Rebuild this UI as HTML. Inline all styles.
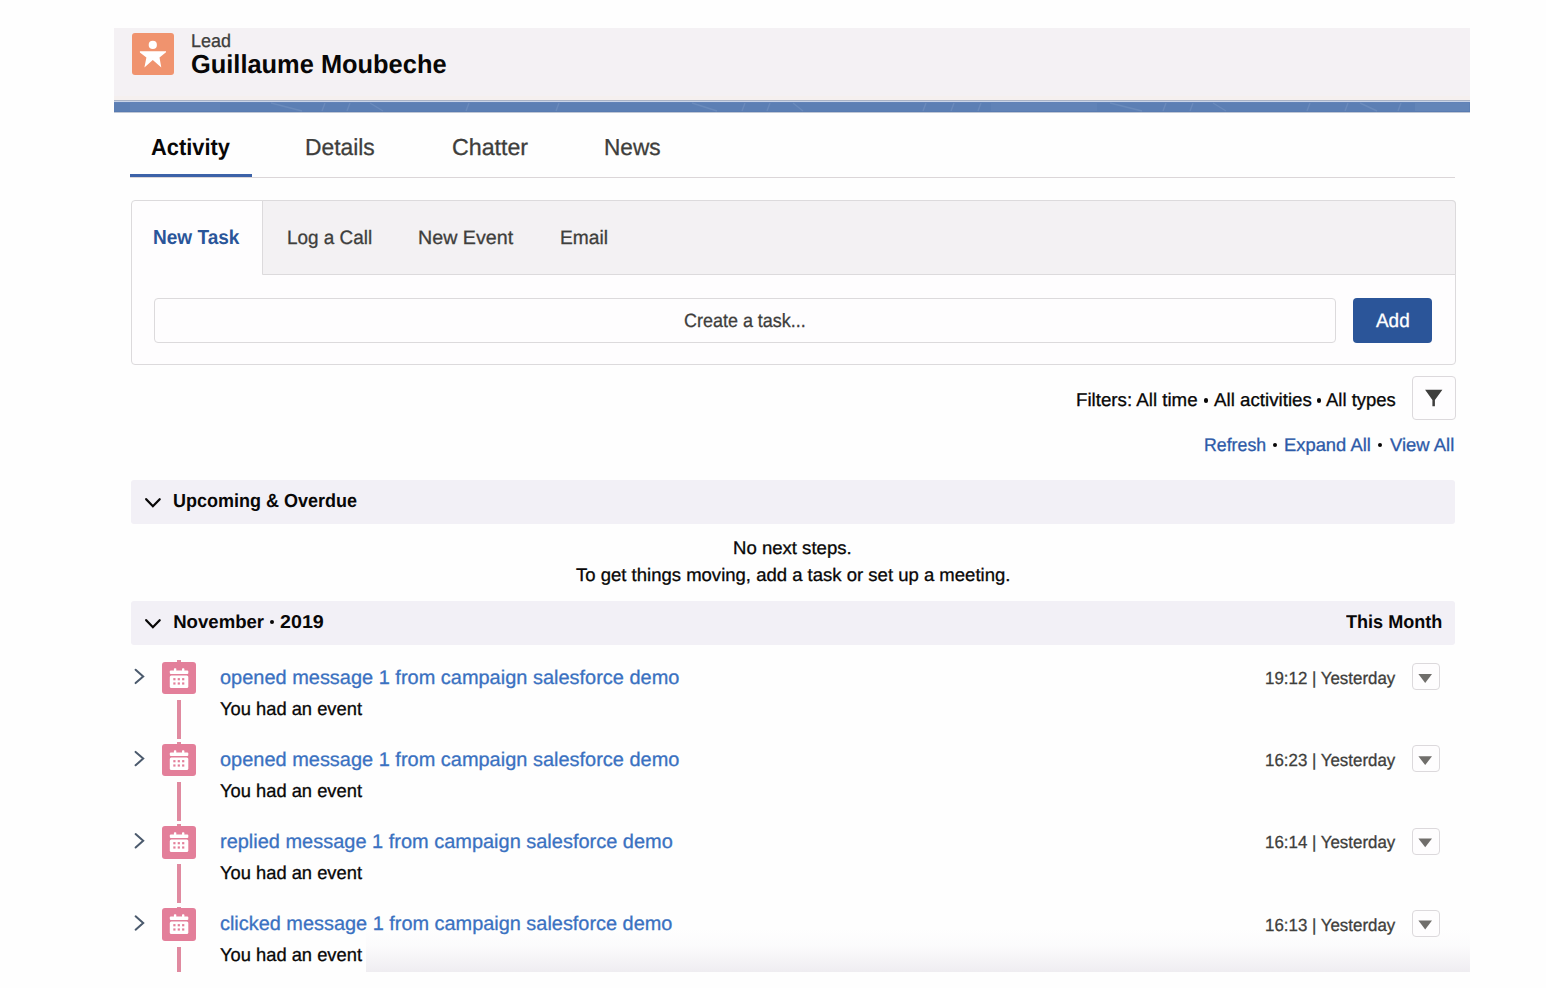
<!DOCTYPE html>
<html><head><meta charset="utf-8">
<style>
html,body{margin:0;padding:0;}
body{width:1546px;height:988px;overflow:hidden;text-rendering:geometricPrecision;background:#fefefe;position:relative;font-family:"Liberation Sans", sans-serif;}
.a{position:absolute;box-sizing:border-box;}
.t{position:absolute;white-space:nowrap;-webkit-text-stroke:0.3px currentColor;line-height:1.2;transform-origin:0 50%;font-family:"Liberation Sans", sans-serif;}
.hdr{left:114px;top:28px;width:1356px;height:72px;background:linear-gradient(#f4f1f4 0,#f4f1f4 68px,#f5f0ef 68px,#f5f0ef 72px);}
.stripe{left:114px;top:100px;width:1356px;height:13px;background:linear-gradient(#a9b3c6 0,#a9b3c6 1px,#c9d4e8 1px,#c9d4e8 2px,#6585bb 2px,#5c7fb4 3px,#5c7fb4 11px,#5577ad 12px,#9aa6bb 12px,#e6e8ee 13px);}
.leadicon{left:131.6px;top:32.7px;width:42.8px;height:42.4px;background:#f0936e;border-radius:3px;}
.tabline{left:130px;top:177.2px;width:1325px;height:1px;background:#dbd6d8;}
.tabactive{left:130px;top:174px;width:122px;height:3.2px;background:#3c62a8;}
.card{left:130.5px;top:200px;width:1325px;height:165px;border:1px solid #dcdadc;border-radius:4px;background:#fefdfe;}
.cardtabs{left:262px;top:200px;width:1193.5px;height:75px;background:#f3f1f3;border-left:1px solid #dcdadc;border-bottom:1px solid #dcdadc;border-top:1px solid #dcdadc;border-right:1px solid #dcdadc;border-radius:0 4px 0 0;}
.input{left:153.5px;top:298px;width:1182.5px;height:44.5px;border:1px solid #dcdadc;border-radius:4px;background:#fefdfe;}
.addbtn{left:1353px;top:298px;width:79px;height:44.5px;background:#2b5599;border-radius:4px;}
.fbtn{left:1412.3px;top:376.3px;width:43.3px;height:43.3px;border:1px solid #dcd9dc;border-radius:4px;background:#fefdfe;}
.sec{left:131px;width:1324px;height:44px;background:#f2f0f6;border-radius:3px;}
.ddbtn{left:1412.3px;width:27.5px;height:27px;border:1px solid #dcd9dc;border-radius:4px;background:#fefdfe;}
.evicon{left:162px;width:34px;height:32.5px;background:#e37f9a;border-radius:3px;}
.tl{left:177.2px;width:3.5px;background:#e08aa0;}
.fade{left:366px;top:928px;width:1104px;height:43.5px;background:linear-gradient(rgba(254,254,254,0) 0%,rgba(250,249,251,0.6) 40%,#efedf1 100%);}
</style></head><body>
<div class="a hdr"></div>
<div class="a stripe"></div>
<svg class="a" style="left:0;top:0" width="1546" height="120">
<g stroke="#9fb6d9" stroke-width="1.4" opacity="0.22" fill="none">
<path d="M271 103 L302 111"/>
<path d="M325 103 L322 111"/>
<path d="M350 103 L347 111"/>
<path d="M370 103 L383 111"/>
<path d="M469 103 L466 111"/>
<path d="M559 103 L556 111"/>
<path d="M692 103 L717 111"/>
<path d="M745 103 L742 111"/>
<path d="M770 103 L767 111"/>
<path d="M793 103 L803 111"/>
<path d="M926 103 L923 111"/>
<path d="M954 103 L951 111"/>
<path d="M981 103 L978 111"/>
<path d="M1110 103 L1142 111"/>
<path d="M1166 103 L1163 111"/>
<path d="M1193 103 L1190 111"/>
<path d="M1213 103 L1226 111"/>
<path d="M1310 103 L1307 111"/>
<path d="M1348 103 L1345 111"/>
<path d="M1360 103 L1377 111"/>
<path d="M1401 103 L1398 111"/>
</g>
<rect x="130" y="103" width="90" height="8" fill="#8fa8d0" opacity="0.12"/>
<rect x="991" y="103" width="106" height="8" fill="#8fa8d0" opacity="0.12"/>
<rect x="1415" y="103" width="54" height="8" fill="#8fa8d0" opacity="0.15"/>
</svg>
<div class="a leadicon"><svg width="44" height="44" viewBox="0 0 44 44" style="position:absolute;left:-0.3px;top:-0.4px">
<circle cx="21.8" cy="12.9" r="4.1" fill="#fff"/>
<path d="M8.9 19.3 L35 19.3 L35 20.3 L28.5 25.4 L30.3 35.6 L21.8 28.1 L13.4 35.6 L15.4 25.4 L8.9 20.5 Z" fill="#fff"/>
</svg></div>
<div class="a tabline"></div>
<div class="a tabactive"></div>
<div class="a card"></div>
<div class="a cardtabs"></div>
<div class="a input"></div>
<div class="a addbtn"></div>
<div class="a fbtn"><svg width="43" height="43" viewBox="0 0 43 43" style="position:absolute;left:-1px;top:-1px">
<path d="M13.1 13.8 L30.4 13.8 L22.9 23.9 L22.9 30.2 L20.4 30.2 L20.4 23.9 Z" fill="#3e3e3c"/>
</svg></div>
<div class="a sec" style="top:480px"></div>
<div class="a sec" style="top:601px"></div>
<svg class="a" style="left:0;top:0" width="1546" height="988">
<g fill="none" stroke="#080707" stroke-width="2.3" stroke-linecap="round" stroke-linejoin="miter">
<path d="M146.2 499.2 L152.9 506.2 L159.7 499.2"/>
<path d="M146.2 620.2 L152.9 627.2 L159.7 620.2"/>
</g>
</svg>
<div class="a fade"></div>
<div class="a evicon" style="top:661.60px"><svg width="34" height="33" viewBox="0 0 34 33" style="position:absolute;left:0;top:0"><rect x="7.8" y="8.6" width="18.5" height="3.3" rx="1" fill="#fff"/><rect x="7.8" y="13.4" width="18.5" height="12.6" rx="1.5" fill="#fff"/><rect x="11.9" y="6.3" width="2.4" height="3" rx="0.8" fill="#fff"/><rect x="20.0" y="6.3" width="2.4" height="3" rx="0.8" fill="#fff"/><rect x="11.3" y="16.1" width="2.2" height="2.2" fill="#e37f9a"/><rect x="11.3" y="20.4" width="2.2" height="2.2" fill="#e37f9a"/><rect x="15.7" y="16.1" width="2.2" height="2.2" fill="#e37f9a"/><rect x="15.7" y="20.4" width="2.2" height="2.2" fill="#e37f9a"/><rect x="20.1" y="16.1" width="2.2" height="2.2" fill="#e37f9a"/><rect x="20.1" y="20.4" width="2.2" height="2.2" fill="#e37f9a"/></svg></div>
<div class="a tl" style="top:660.00px;height:1.6px"></div>
<div class="a tl" style="top:700.00px;height:38.80px"></div>
<div class="a ddbtn" style="top:663.10px"></div>
<div class="a evicon" style="top:743.80px"><svg width="34" height="33" viewBox="0 0 34 33" style="position:absolute;left:0;top:0"><rect x="7.8" y="8.6" width="18.5" height="3.3" rx="1" fill="#fff"/><rect x="7.8" y="13.4" width="18.5" height="12.6" rx="1.5" fill="#fff"/><rect x="11.9" y="6.3" width="2.4" height="3" rx="0.8" fill="#fff"/><rect x="20.0" y="6.3" width="2.4" height="3" rx="0.8" fill="#fff"/><rect x="11.3" y="16.1" width="2.2" height="2.2" fill="#e37f9a"/><rect x="11.3" y="20.4" width="2.2" height="2.2" fill="#e37f9a"/><rect x="15.7" y="16.1" width="2.2" height="2.2" fill="#e37f9a"/><rect x="15.7" y="20.4" width="2.2" height="2.2" fill="#e37f9a"/><rect x="20.1" y="16.1" width="2.2" height="2.2" fill="#e37f9a"/><rect x="20.1" y="20.4" width="2.2" height="2.2" fill="#e37f9a"/></svg></div>
<div class="a tl" style="top:742.20px;height:1.6px"></div>
<div class="a tl" style="top:782.20px;height:38.80px"></div>
<div class="a ddbtn" style="top:745.30px"></div>
<div class="a evicon" style="top:826.00px"><svg width="34" height="33" viewBox="0 0 34 33" style="position:absolute;left:0;top:0"><rect x="7.8" y="8.6" width="18.5" height="3.3" rx="1" fill="#fff"/><rect x="7.8" y="13.4" width="18.5" height="12.6" rx="1.5" fill="#fff"/><rect x="11.9" y="6.3" width="2.4" height="3" rx="0.8" fill="#fff"/><rect x="20.0" y="6.3" width="2.4" height="3" rx="0.8" fill="#fff"/><rect x="11.3" y="16.1" width="2.2" height="2.2" fill="#e37f9a"/><rect x="11.3" y="20.4" width="2.2" height="2.2" fill="#e37f9a"/><rect x="15.7" y="16.1" width="2.2" height="2.2" fill="#e37f9a"/><rect x="15.7" y="20.4" width="2.2" height="2.2" fill="#e37f9a"/><rect x="20.1" y="16.1" width="2.2" height="2.2" fill="#e37f9a"/><rect x="20.1" y="20.4" width="2.2" height="2.2" fill="#e37f9a"/></svg></div>
<div class="a tl" style="top:824.40px;height:1.6px"></div>
<div class="a tl" style="top:864.40px;height:38.80px"></div>
<div class="a ddbtn" style="top:827.50px"></div>
<div class="a evicon" style="top:908.20px"><svg width="34" height="33" viewBox="0 0 34 33" style="position:absolute;left:0;top:0"><rect x="7.8" y="8.6" width="18.5" height="3.3" rx="1" fill="#fff"/><rect x="7.8" y="13.4" width="18.5" height="12.6" rx="1.5" fill="#fff"/><rect x="11.9" y="6.3" width="2.4" height="3" rx="0.8" fill="#fff"/><rect x="20.0" y="6.3" width="2.4" height="3" rx="0.8" fill="#fff"/><rect x="11.3" y="16.1" width="2.2" height="2.2" fill="#e37f9a"/><rect x="11.3" y="20.4" width="2.2" height="2.2" fill="#e37f9a"/><rect x="15.7" y="16.1" width="2.2" height="2.2" fill="#e37f9a"/><rect x="15.7" y="20.4" width="2.2" height="2.2" fill="#e37f9a"/><rect x="20.1" y="16.1" width="2.2" height="2.2" fill="#e37f9a"/><rect x="20.1" y="20.4" width="2.2" height="2.2" fill="#e37f9a"/></svg></div>
<div class="a tl" style="top:906.60px;height:1.6px"></div>
<div class="a tl" style="top:946.60px;height:25.40px"></div>
<div class="a ddbtn" style="top:909.70px"></div>
<svg class="a" style="left:0;top:0" width="1546" height="988">
<path d="M135.6 669.70 L143.2 676.40 L135.6 683.10" fill="none" stroke="#4b5a6d" stroke-width="2" stroke-linecap="round"/>
<path d="M1418.4 674.00 L1432 674.00 L1425.2 682.90 Z" fill="#706e6b"/>
<path d="M135.6 751.90 L143.2 758.60 L135.6 765.30" fill="none" stroke="#4b5a6d" stroke-width="2" stroke-linecap="round"/>
<path d="M1418.4 756.20 L1432 756.20 L1425.2 765.10 Z" fill="#706e6b"/>
<path d="M135.6 834.10 L143.2 840.80 L135.6 847.50" fill="none" stroke="#4b5a6d" stroke-width="2" stroke-linecap="round"/>
<path d="M1418.4 838.40 L1432 838.40 L1425.2 847.30 Z" fill="#706e6b"/>
<path d="M135.6 916.30 L143.2 923.00 L135.6 929.70" fill="none" stroke="#4b5a6d" stroke-width="2" stroke-linecap="round"/>
<path d="M1418.4 920.60 L1432 920.60 L1425.2 929.50 Z" fill="#706e6b"/>
</svg>
<div class="t" style="left:190.86px;top:30.23px;font-size:18.46px;line-height:22px;font-weight:normal;color:#3e3e3c;transform:scaleX(0.9727);">Lead</div>
<div class="t" style="left:191.28px;top:49.44px;font-size:26.06px;line-height:31px;font-weight:bold;-webkit-text-stroke:0;color:#080707;transform:scaleX(0.9755);">Guillaume Moubeche</div>
<div class="t" style="left:150.86px;top:132.85px;font-size:23.11px;line-height:28px;font-weight:bold;-webkit-text-stroke:0;color:#080707;transform:scaleX(0.9457);">Activity</div>
<div class="t" style="left:305.48px;top:132.85px;font-size:23.11px;line-height:28px;font-weight:normal;color:#3e3e3c;transform:scaleX(0.9870);">Details</div>
<div class="t" style="left:451.64px;top:132.85px;font-size:23.11px;line-height:28px;font-weight:normal;color:#3e3e3c;transform:scaleX(1.0036);">Chatter</div>
<div class="t" style="left:603.69px;top:132.85px;font-size:23.11px;line-height:28px;font-weight:normal;color:#3e3e3c;transform:scaleX(0.9793);">News</div>
<div class="t" style="left:153.16px;top:226.35px;font-size:20.20px;line-height:24px;font-weight:bold;-webkit-text-stroke:0;color:#2a5599;transform:scaleX(0.9429);">New Task</div>
<div class="t" style="left:287.09px;top:227.08px;font-size:19.33px;line-height:23px;font-weight:normal;color:#3e3e3c;transform:scaleX(0.9776);">Log a Call</div>
<div class="t" style="left:417.83px;top:227.08px;font-size:19.33px;line-height:23px;font-weight:normal;color:#3e3e3c;transform:scaleX(1.0177);">New Event</div>
<div class="t" style="left:559.57px;top:227.08px;font-size:19.33px;line-height:23px;font-weight:normal;color:#3e3e3c;transform:scaleX(0.9923);">Email</div>
<div class="t" style="left:683.70px;top:309.83px;font-size:19.19px;line-height:23px;font-weight:normal;color:#3e3e3c;transform:scaleX(0.9360);">Create a task...</div>
<div class="t" style="left:1376.00px;top:309.93px;font-size:19.35px;line-height:23px;font-weight:normal;color:#ffffff;transform:scaleX(0.9779);">Add</div>
<div class="t" style="left:173.22px;top:490.15px;font-size:19.04px;line-height:23px;font-weight:bold;-webkit-text-stroke:0;color:#080707;transform:scaleX(0.9455);">Upcoming &amp; Overdue</div>
<div class="t" style="left:733.31px;top:537.32px;font-size:18.18px;line-height:22px;font-weight:normal;color:#080707;transform:scaleX(1.0214);">No next steps.</div>
<div class="t" style="left:576.33px;top:563.79px;font-size:18.17px;line-height:22px;font-weight:normal;color:#080707;transform:scaleX(1.0199);">To get things moving, add a task or set up a meeting.</div>
<div class="t" style="left:1346.02px;top:610.73px;font-size:18.50px;line-height:22px;font-weight:bold;-webkit-text-stroke:0;color:#080707;transform:scaleX(0.9769);">This Month</div>
<div class="t" style="left:1075.60px;top:389.07px;font-size:18.44px;line-height:22px;font-weight:normal;color:#080707;transform:scaleX(1.0144);">Filters: All time</div>
<div class="t" style="left:1213.50px;top:389.07px;font-size:18.44px;line-height:22px;font-weight:normal;color:#080707;transform:scaleX(1.0157);">All activities</div>
<div class="t" style="left:1326.20px;top:389.07px;font-size:18.44px;line-height:22px;font-weight:normal;color:#080707;transform:scaleX(1.0021);">All types</div>
<div class="t" style="left:1203.58px;top:433.62px;font-size:18.36px;line-height:22px;font-weight:normal;color:#2d5aa8;transform:scaleX(0.9663);">Refresh</div>
<div class="t" style="left:1283.63px;top:433.62px;font-size:18.36px;line-height:22px;font-weight:normal;color:#2d5aa8;transform:scaleX(1.0005);">Expand All</div>
<div class="t" style="left:1389.50px;top:433.62px;font-size:18.36px;line-height:22px;font-weight:normal;color:#2d5aa8;transform:scaleX(1.0044);">View All</div>
<div class="t" style="left:173.18px;top:610.89px;font-size:18.60px;line-height:22px;font-weight:bold;-webkit-text-stroke:0;color:#080707;transform:scaleX(1.0000);">November</div>
<div class="t" style="left:280.11px;top:610.89px;font-size:18.60px;line-height:22px;font-weight:bold;-webkit-text-stroke:0;color:#080707;transform:scaleX(1.0583);">2019</div>
<div class="t" style="left:220.10px;top:665.86px;font-size:19.77px;line-height:24px;font-weight:normal;color:#3a71c1;transform:scaleX(1.0099);">opened message 1 from campaign salesforce demo</div>
<div class="t" style="left:219.83px;top:697.75px;font-size:18.68px;line-height:22px;font-weight:normal;color:#080707;transform:scaleX(0.9814);">You had an event</div>
<div class="t" style="left:1264.72px;top:667.96px;font-size:17.47px;line-height:21px;font-weight:normal;color:#3e3e3c;transform:scaleX(0.9679);">19:12 | Yesterday</div>
<div class="t" style="left:220.10px;top:748.06px;font-size:19.77px;line-height:24px;font-weight:normal;color:#3a71c1;transform:scaleX(1.0099);">opened message 1 from campaign salesforce demo</div>
<div class="t" style="left:219.83px;top:779.95px;font-size:18.68px;line-height:22px;font-weight:normal;color:#080707;transform:scaleX(0.9814);">You had an event</div>
<div class="t" style="left:1264.72px;top:750.16px;font-size:17.47px;line-height:21px;font-weight:normal;color:#3e3e3c;transform:scaleX(0.9679);">16:23 | Yesterday</div>
<div class="t" style="left:219.70px;top:830.26px;font-size:19.77px;line-height:24px;font-weight:normal;color:#3a71c1;transform:scaleX(1.0101);">replied message 1 from campaign salesforce demo</div>
<div class="t" style="left:219.83px;top:862.15px;font-size:18.68px;line-height:22px;font-weight:normal;color:#080707;transform:scaleX(0.9814);">You had an event</div>
<div class="t" style="left:1264.72px;top:832.36px;font-size:17.47px;line-height:21px;font-weight:normal;color:#3e3e3c;transform:scaleX(0.9679);">16:14 | Yesterday</div>
<div class="t" style="left:220.10px;top:912.46px;font-size:19.77px;line-height:24px;font-weight:normal;color:#3a71c1;transform:scaleX(1.0068);">clicked message 1 from campaign salesforce demo</div>
<div class="t" style="left:219.83px;top:944.35px;font-size:18.68px;line-height:22px;font-weight:normal;color:#080707;transform:scaleX(0.9814);">You had an event</div>
<div class="t" style="left:1264.72px;top:914.56px;font-size:17.47px;line-height:21px;font-weight:normal;color:#3e3e3c;transform:scaleX(0.9679);">16:13 | Yesterday</div>
<div class="a" style="left:1203.60px;top:398.20px;width:4.4px;height:4.4px;border-radius:50%;background:#080707"></div>
<div class="a" style="left:1316.60px;top:398.20px;width:4.4px;height:4.4px;border-radius:50%;background:#080707"></div>
<div class="a" style="left:1272.60px;top:442.90px;width:4.2px;height:4.2px;border-radius:50%;background:#080707"></div>
<div class="a" style="left:1378.30px;top:442.90px;width:4.2px;height:4.2px;border-radius:50%;background:#080707"></div>
<div class="a" style="left:269.80px;top:619.80px;width:4.4px;height:4.4px;border-radius:50%;background:#080707"></div>
</body></html>
